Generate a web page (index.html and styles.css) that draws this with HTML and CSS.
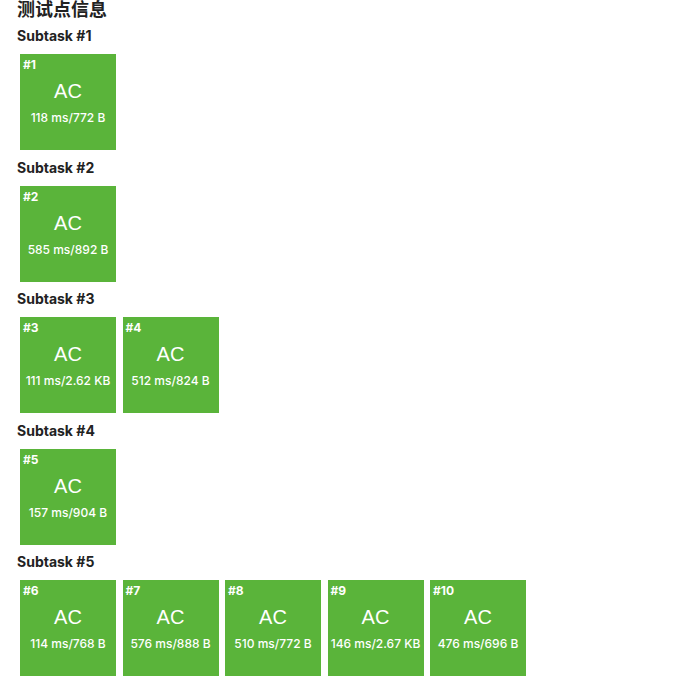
FILE: index.html
```html
<!DOCTYPE html>
<html lang="zh">
<head>
<meta charset="utf-8">
<link rel="stylesheet" href="styles.css">
</head>
<body>
<h3 class="title">测试点信息</h3>
<div class="group">
  <div class="label">Subtask #1</div>
  <div class="cases">
    <div class="case"><span class="num">#1</span><span class="status">AC</span><span class="info">118 ms/772 B</span></div>
  </div>
</div>
<div class="group">
  <div class="label">Subtask #2</div>
  <div class="cases">
    <div class="case"><span class="num">#2</span><span class="status">AC</span><span class="info">585 ms/892 B</span></div>
  </div>
</div>
<div class="group">
  <div class="label">Subtask #3</div>
  <div class="cases">
    <div class="case"><span class="num">#3</span><span class="status">AC</span><span class="info">111 ms/2.62 KB</span></div>
    <div class="case"><span class="num">#4</span><span class="status">AC</span><span class="info">512 ms/824 B</span></div>
  </div>
</div>
<div class="group">
  <div class="label">Subtask #4</div>
  <div class="cases">
    <div class="case"><span class="num">#5</span><span class="status">AC</span><span class="info">157 ms/904 B</span></div>
  </div>
</div>
<div class="group">
  <div class="label">Subtask #5</div>
  <div class="cases">
    <div class="case"><span class="num">#6</span><span class="status">AC</span><span class="info">114 ms/768 B</span></div>
    <div class="case"><span class="num">#7</span><span class="status">AC</span><span class="info">576 ms/888 B</span></div>
    <div class="case"><span class="num">#8</span><span class="status">AC</span><span class="info">510 ms/772 B</span></div>
    <div class="case"><span class="num">#9</span><span class="status">AC</span><span class="info">146 ms/2.67 KB</span></div>
    <div class="case"><span class="num">#10</span><span class="status">AC</span><span class="info">476 ms/696 B</span></div>
  </div>
</div>
</body>
</html>
```

FILE: styles.css
```css
html, body {
  margin: 0;
  background: #ffffff;
}
body {
  padding: 0 0 0 17px;
  font-family: "Inter", "Noto Sans CJK SC", sans-serif;
  color: #222222;
}
.title {
  margin: -4px 0 7px 0;
  font-size: 18px;
  line-height: 24px;
  font-weight: 700;
  font-family: "Noto Sans CJK SC", sans-serif;
}
.group {
  margin-bottom: 5.5px;
}
.label {
  font-size: 14px;
  line-height: 18px;
  font-weight: 700;
}
.cases {
  display: flex;
  flex-wrap: wrap;
  gap: 6.5px;
  padding: 3px;
  margin-top: 6px;
}
.case {
  width: 96px;
  height: 96px;
  box-sizing: border-box;
  padding: 3px 3px;
  background: #5ab43a;
  color: #ffffff;
  display: flex;
  flex-direction: column;
  align-items: center;
}
.num {
  align-self: flex-start;
  font-size: 12px;
  line-height: 16px;
  font-weight: 700;
}
.status {
  margin-top: 6px;
  font-size: 20px;
  line-height: 24px;
  font-family: "Liberation Sans", sans-serif;
}
.info {
  margin-top: 7px;
  font-size: 12px;
  line-height: 16px;
  font-weight: 500;
}
```
